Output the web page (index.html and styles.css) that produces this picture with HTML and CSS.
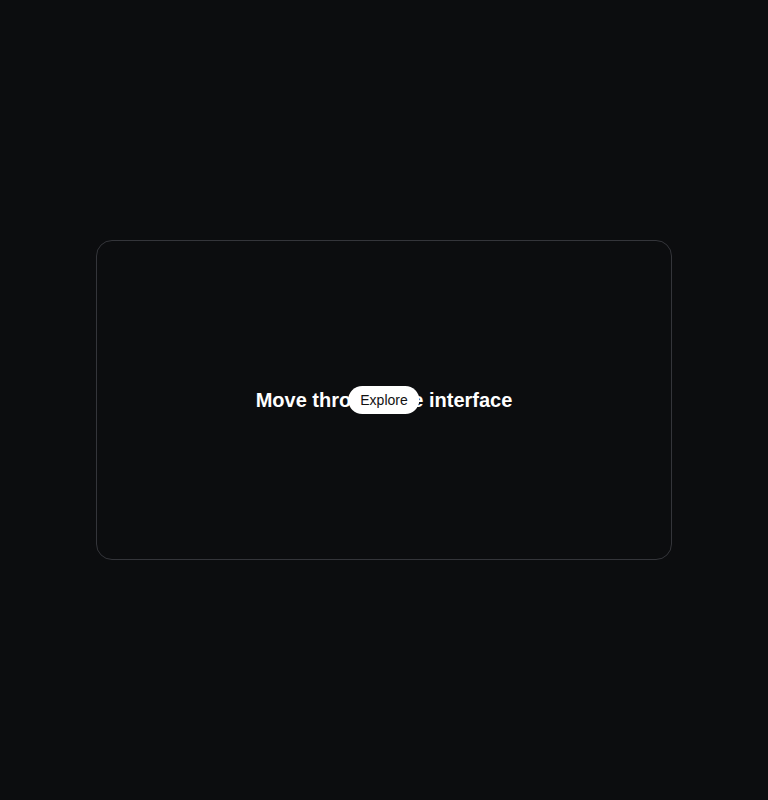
FILE: index.html
```html
<!DOCTYPE html>
<html>
<head>
<meta charset="utf-8">
<link rel="stylesheet" href="styles.css">
</head>
<body>
<main class="page">
  <section class="card">
    <h1 class="title">Move through the interface</h1>
    <span class="pill">Explore</span>
  </section>
</main>
</body>
</html>
```
FILE: styles.css
```css
html, body {
  margin: 0;
  padding: 0;
  background: #0c0d0f;
}
.page {
  width: 768px;
  height: 800px;
  display: flex;
  align-items: center;
  justify-content: center;
  font-family: "Liberation Sans", Arial, sans-serif;
}
.card {
  box-sizing: border-box;
  width: 576px;
  height: 320px;
  border: 1px solid #34353a;
  border-radius: 16px;
  position: relative;
  display: flex;
  align-items: center;
  justify-content: center;
}
.title {
  margin: 0;
  font-size: 20px;
  font-weight: 700;
  color: #ffffff;
}
.pill {
  position: absolute;
  left: 50%;
  top: 50%;
  transform: translate(-50%, -50%);
  background: #ffffff;
  color: #111;
  font-size: 14px;
  padding: 6px 12px;
  border-radius: 999px;
  line-height: 16px;
}
```
